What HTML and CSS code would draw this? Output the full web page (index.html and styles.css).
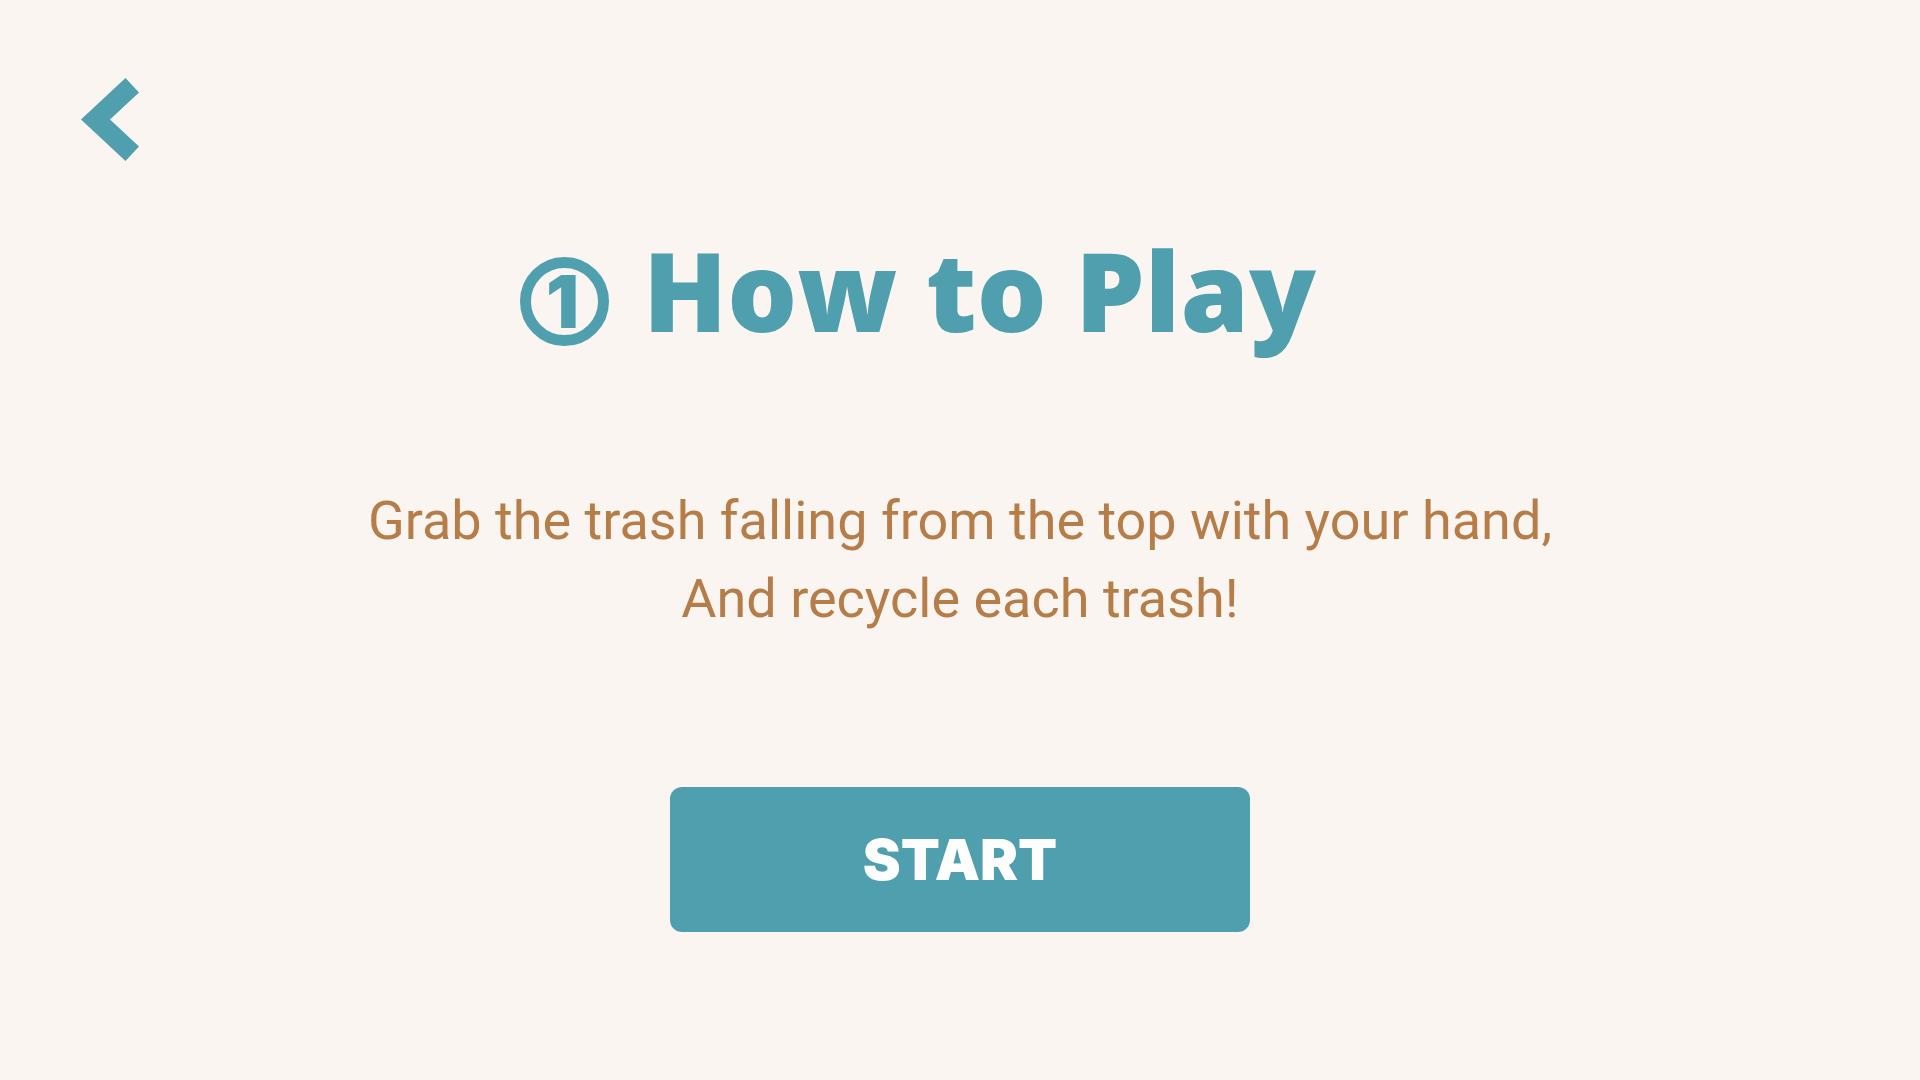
FILE: index.html
```html
<!DOCTYPE html>
<html lang="en">
<head>
<meta charset="utf-8">
<meta name="viewport" content="width=device-width, initial-scale=1">
<title>How to Play</title>
<link rel="stylesheet" href="styles.css">
</head>
<body>
<header class="topbar">
  <a class="back" href="#" aria-label="Back">
    <svg class="back-icon" viewBox="0 0 58 83" aria-hidden="true"><path d="M0 41.5 44.500 0 58 14.500 29 41.500 58 68.500 44.500 83Z"/></svg>
  </a>
</header>
<main class="intro">
  <h1 class="title"><span class="step">1</span><span>How to Play</span></h1>
  <p class="lead">Grab the trash falling from the top with your hand,<br>And recycle each trash!</p>
  <button class="start" type="button">START</button>
</main>
</body>
</html>
```
FILE: styles.css
```css
body {
  margin: 0;
  min-height: 100vh;
  background: #faf5f1;
  color: #b67d48;
  font-family: Roboto, "Liberation Sans", sans-serif;
}

.topbar {
  display: flex;
  padding: 78px 81px 0;
}

.back {
  display: block;
}

.back-icon {
  display: block;
  width: 58px;
  height: 83px;
  fill: #509fae;
}

.intro {
  display: flex;
  flex-direction: column;
  align-items: center;
  padding: 71px 32px;
}

.title {
  display: flex;
  align-items: flex-end;
  gap: 34px;
  margin: 0 84px 0 0;
  color: #509fae;
  font: 800 110px/114px "Open Sans", "Noto Sans", sans-serif;
}

.step {
  box-sizing: border-box;
  width: 89px;
  height: 89px;
  padding-right: 4px;
  border: 11px solid #509fae;
  border-radius: 50%;
  font: 900 73px/67px Inter, sans-serif;
  text-align: center;
}

.lead {
  margin: 136px 0 0;
  font-size: 54px;
  line-height: 78px;
  text-align: center;
}

.start {
  width: 580px;
  max-width: 100%;
  height: 145px;
  margin: 149px 0 0;
  border: 0;
  border-radius: 12px;
  background: #509fae;
  color: #fff;
  font: 900 57px/64px Inter, "Liberation Sans", sans-serif;
}
```
